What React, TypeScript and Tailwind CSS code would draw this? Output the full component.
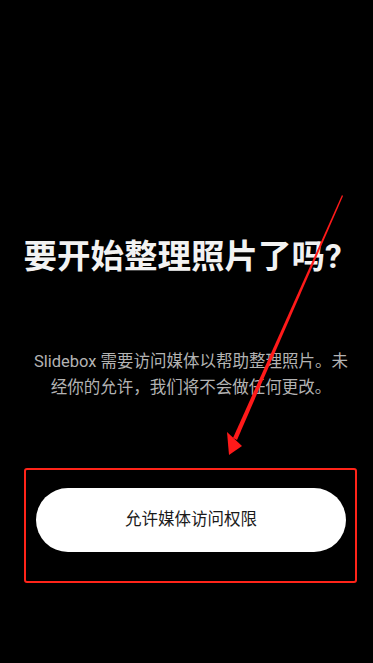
import React from 'react';

const font = { fontFamily: 'Roboto, "Noto Sans CJK SC", "Noto Sans", sans-serif' };

const AnnotationArrow = () => (
  <svg className="pointer-events-none absolute inset-0" width="373" height="663" viewBox="0 0 373 663">
    <polygon points="342,195 343,196 237,440 233,438" fill="#ff1a1a" />
    <polygon points="229,455 227,432 242,446" fill="#ff1a1a" />
  </svg>
);

export default function App() {
  return (
    <div className="relative min-h-screen w-full overflow-hidden bg-black" style={font}>
      <div className="flex flex-col">
        <h1 className="mt-[240px] whitespace-nowrap pr-[8px] text-center text-[33.5px] leading-[34px] font-bold text-[#f2f2f2]">
          要开始整理照片了吗?
        </h1>

        <p className="mt-[75px] ml-[28px] w-[326px] text-center text-[16.5px] leading-[26px] text-[#b3b3b3]">
          Slidebox 需要访问媒体以帮助整理照片。未经你的允许，我们将不会做任何更改。
        </p>

        <button className="mt-[87px] ml-[36px] flex h-[64px] w-[310px] items-center justify-center rounded-full bg-white text-[16.5px] text-[#1a1a1a]">
          允许媒体访问权限
        </button>
      </div>

      {/* red annotation */}
      <div className="pointer-events-none absolute left-[24px] top-[468px] h-[115px] w-[333px] rounded-[3px] border-[2.5px] border-[#ff2419]" />
      <AnnotationArrow />
    </div>
  );
}
